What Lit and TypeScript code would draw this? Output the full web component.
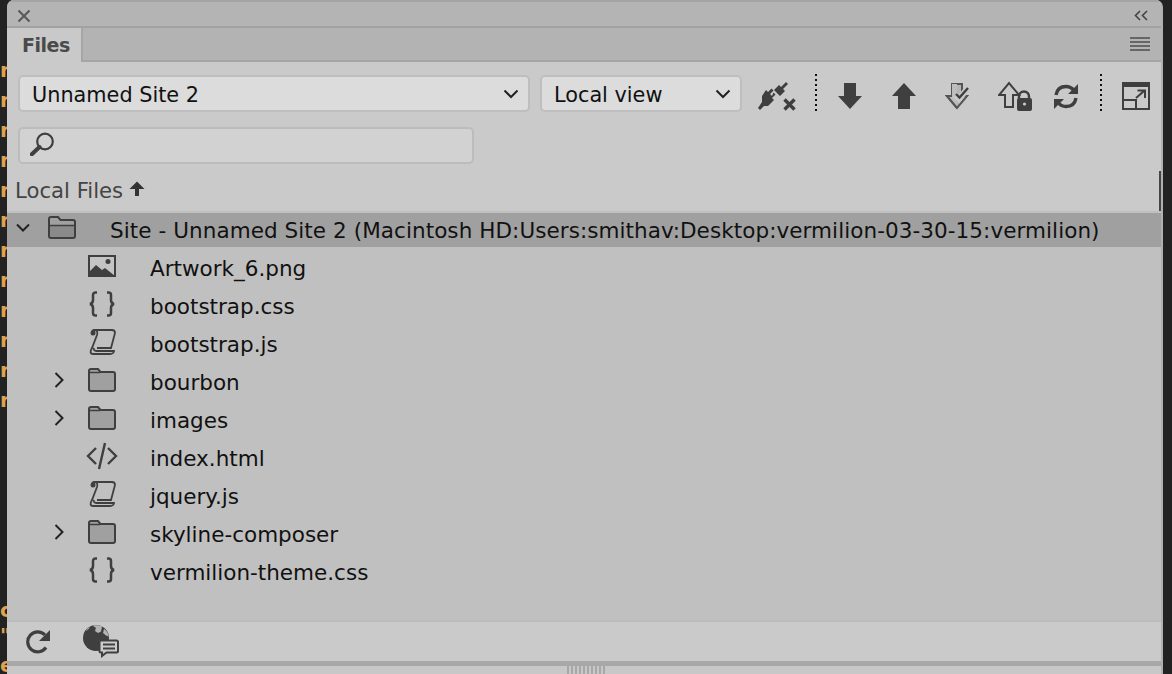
import { LitElement, html, css, svg } from "lit";
import { customElement } from "lit/decorators.js";

const I = "#3f3f3f";
const icon = (w: number, h: number, vb: string, body: unknown, cls = "") =>
  html`<svg class=${cls} width=${w} height=${h} viewBox=${vb}>${body}</svg>`;

const chevD = icon(16, 10, "0 0 16 10", svg`<path d="M1.500 1.500 8 8l6.500-6.500" fill="none" stroke="#222" stroke-width="2"/>`);
const chevR = icon(10, 16, "0 0 10 16", svg`<path d="M1.500 1 8.500 8l-7 7" fill="none" stroke="#222" stroke-width="2"/>`);
const selChev = icon(14, 9, "0 0 14 9", svg`<path d="M1 1.500 7 7.500l6-6" fill="none" stroke="#222" stroke-width="2"/>`);

const folder = icon(28, 24, "0 0 28 24", svg`<path d="M1 5V3a2 2 0 0 1 2-2h7l2.500 3H25a2 2 0 0 1 2 2v15a2 2 0 0 1-2 2H3a2 2 0 0 1-2-2Z" fill="#a0a0a0" stroke="${I}" stroke-width="2"/><path d="M1 4.500h11" stroke="${I}" stroke-width="1.500"/>`);
const siteFolder = icon(28, 23, "0 0 28 23", svg`<path d="M2 10h24v10a2 2 0 0 1-2 2H4a2 2 0 0 1-2-2Z" fill="#8a8a8a"/><path d="M1 5V3a2 2 0 0 1 2-2h7l2.500 3H25a2 2 0 0 1 2 2v14a2 2 0 0 1-2 2H3a2 2 0 0 1-2-2Z" fill="none" stroke="${I}" stroke-width="2"/><path d="M1 9.500h26" stroke="${I}" stroke-width="1.500"/>`);
const image = icon(28, 22, "0 0 28 22", svg`<path d="M0 0h28v22H0Z" fill="${I}"/><path d="M2 2h24v18H2Z" fill="#c4c4c4"/><path d="M1 21V17l7-7 6 5 3-2 10 8Z" fill="${I}"/><circle cx="20" cy="6.500" r="2.500" fill="${I}"/>`);
const braces = icon(26, 26, "0 0 26 26", svg`<path d="M8 1.500H6.500A2.500 2.500 0 0 0 4 4V9c0 2-1 3.500-3 4 2 .5 3 2 3 4v5A2.500 2.500 0 0 0 6.500 24.500H8M18 1.500h1.500A2.500 2.500 0 0 1 22 4V9c0 2 1 3.500 3 4-2 .5-3 2-3 4v5a2.500 2.500 0 0 1-2.500 2.500H18" fill="none" stroke="${I}" stroke-width="2.500"/>`);
const scroll = icon(27, 26, "0 0 27 26", svg`<path d="M3 3a2 2 0 0 1 2-2h18c2 0 3 1 3 3l-4 15H8M5 1c3 0 4 2 3 5L3 19c-2 3-2 6 1 6h17c3 0 4-2 4-3H8c-2 0-4-1-3-3" fill="none" stroke="${I}" stroke-width="1.800"/><circle cx="4" cy="4" r="2.500" fill="${I}"/><path d="M7 22h16" stroke="${I}" stroke-width="1.500"/>`);
const code = icon(32, 28, "0 0 32 28", svg`<path d="M10 6 2 14l8 8M22 6l8 8-8 8M19 1l-6 26" fill="none" stroke="${I}" stroke-width="2.400"/>`);

const search = icon(25, 24, "0 0 25 24", svg`<circle cx="15" cy="9.500" r="7.800" fill="none" stroke="${I}" stroke-width="2.200"/><path d="M9.500 15 1.800 22.300" stroke="${I}" stroke-width="4" stroke-linecap="round"/>`);
const plug = icon(40, 31, "0 0 40 31", svg`<g fill="${I}"><path d="M17 9 22 4l2 2 5-5 2 2-5 5 2 2-5 5Z"/><path d="M1 27l2 2 4-4h4l6-6-2-2 3.500-3.500-2-2L15 15l-2-2 3.500-3.500-2-2L11 11 9 9 5 15v6Z"/></g><path d="M27.500 18.500l10 10M37.500 18.500l-10 10" stroke="${I}" stroke-width="3.400"/>`);
const down = icon(24, 26, "0 0 24 26", svg`<path d="M6 0h12v13h6L12 26 0 13h6Z" fill="${I}"/>`);
const up = icon(24, 26, "0 0 24 26", svg`<path d="M6 26h12V13h6L12 0 0 13h6Z" fill="${I}"/>`);
const checkout = icon(24, 27, "0 0 24 27", svg`<path d="M7 1h10v12h5L12 25 2 13h5Z" fill="#b5b5b5" stroke="#555" stroke-width="2"/><path d="M12 25 2 13h5V1h5Z" fill="#bdbdbd"/><path d="M12 25 2 13h5" fill="none" stroke="#555" stroke-width="2"/><path d="M10 12 14 16 23 5" fill="none" stroke="#c9c9c9" stroke-width="6"/><path d="M11 11 14.500 14.500 23 5" fill="none" stroke="${I}" stroke-width="2.400"/>`);
const lockUp = icon(35, 31, "0 0 35 31", svg`<path d="M7 26V14H1L11 2l10 12h-6v12Z" fill="#c9c9c9" stroke="${I}" stroke-width="2"/><path d="M21 18v-2.500a5 5 0 0 1 10 0V18" fill="none" stroke="${I}" stroke-width="2.400"/><rect x="19" y="17" width="15" height="13" rx="2" fill="${I}"/><circle cx="26.500" cy="23" r="1.600" fill="#c9c9c9"/>`);
const sync = icon(26, 27, "0 0 26 27", svg`<path d="M3 12C4 6 8 3.500 13 3.500c3.500 0 6 1.500 8 4M23 15c-1 6-5 8.500-10 8.500-3.500 0-6-1.500-8-4" fill="none" stroke="${I}" stroke-width="3.400"/><path d="M25 1v10H15ZM1 26V16h10Z" fill="${I}"/>`);
const expand = icon(28, 28, "0 0 28 28", svg`<path d="M0 0h28v28H0Z" fill="${I}"/><path d="M2 5h24v21H2Z" fill="#cacaca"/><path d="M2 17h11v2H2ZM13 17h2v9h-2Z" fill="${I}"/><path d="M14 16 22 9M15.500 8.500h7.500v7.500" fill="none" stroke="${I}" stroke-width="2"/>`);
const refresh = icon(26, 25, "0 0 26 25", svg`<path d="M21 18.500A10 10 0 1 1 20 6" fill="none" stroke="${I}" stroke-width="3.200"/><path d="M25 1v11H14Z" fill="${I}"/>`);
const globe = icon(36, 33, "0 0 36 33", svg`<circle cx="13" cy="13" r="13" fill="${I}"/><path d="M10 .5c1 1.500 2 2 3 2l-1 3.500 3 2 3-1.500 1-5C17 .5 13 0 10 .5ZM21 4l-1 4 3 2.500 2.500 1C25.500 8.500 24 6 21 4ZM2.500 6C4.500 5 6 4 7 2 5 3 3.500 4.500 2.500 6Z" fill="#b4b4b4"/><path d="M17 15h19v15H21l-5 3V15Z" fill="#cacaca"/><path d="M18 15.500h15.500a1.500 1.500 0 0 1 1.500 1.500v9a1.500 1.500 0 0 1-1.500 1.500h-10L19 31v-3.500h-1a1.500 1.500 0 0 1-1.500-1.500v-9a1.500 1.500 0 0 1 1.500-1.500Z" fill="#cacaca" stroke="${I}" stroke-width="2"/><path d="M20 19.500h12M20 23.500h12" stroke="${I}" stroke-width="2"/>`);
const closeX = icon(14, 14, "0 0 14 14", svg`<path d="M1.500 1.500 12.500 12.500M12.500 1.500 1.500 12.500" stroke="#5a5a5a" stroke-width="2.200"/>`);
const collapse = icon(14, 11, "0 0 14 11", svg`<path d="M6 1 1.500 5.500 6 10M13 1 8.500 5.500 13 10" fill="none" stroke="#444" stroke-width="1.600"/>`);
const sortUp = icon(16, 15, "0 0 16 15", svg`<path d="M8 .5 15.500 8H10V15H6V8H.5Z" fill="#333"/>`);

const rows = [
  { n: "Artwork_6.png", i: image },
  { n: "bootstrap.css", i: braces },
  { n: "bootstrap.js", i: scroll },
  { n: "bourbon", i: folder, c: true },
  { n: "images", i: folder, c: true },
  { n: "index.html", i: code },
  { n: "jquery.js", i: scroll },
  { n: "skyline-composer", i: folder, c: true },
  { n: "vermilion-theme.css", i: braces },
];
const edge = ["r","r","r","r","r","r","r","r","r","r","r","r"];

@customElement("app-root")
export class AppRoot extends LitElement {
  static styles = css`
    :host { display: block; width: 1172px; height: 674px; overflow: hidden; font-family: "DejaVu Sans", sans-serif; color: #111; }
    * { box-sizing: border-box; }
    svg { display: block; flex: none; }
    .frame { display: flex; width: 1172px; height: 674px; background: #222; }
    .edge { width: 7px; flex: none; overflow: hidden; display: flex; flex-direction: column; padding-top: 55px; color: #e0a24e; font: 700 20px/30px "DejaVu Sans", sans-serif; }
    .edge span { display: block; height: 30px; }
    .edge .low { margin-top: 180px; height: 25px; }
    .panel { width: 1156px; flex: none; display: flex; flex-direction: column; background: #cacaca; border-radius: 7px 7px 0 0; overflow: hidden; border-right: 2px solid #b0b0b0; }
    .topbar { height: 28px; flex: none; display: flex; align-items: center; justify-content: space-between; padding: 3px 13px 0 10px; background: #b4b4b4; border-top: 2px solid #a4a4a4; border-bottom: 2px solid #a2a2a2; }
    .tabs { height: 34px; flex: none; display: flex; background: #b3b3b3; border-bottom: 2px solid #a6a6a6; align-items: stretch; }
    .tab { width: 76px; margin-bottom: -2px; background: #c9c9c9; border-right: 2px solid #a6a6a6; font-weight: 700; font-size: 19px; letter-spacing: -0.5px; color: #4a4a4a; padding: 3px 0 0 15px; line-height: 28px; }
    .menu { margin-left: auto; margin-right: 11px; align-self: center; width: 20px; height: 14px; display: flex; flex-direction: column; justify-content: space-between; }
    .menu i { display: block; height: 2px; background: #666; }
    .toolbar { height: 51px; flex: none; display: flex; align-items: center; padding: 12px 0 0 11px; }
    .select { height: 37px; flex: none; display: flex; align-items: center; justify-content: space-between; background: #dcdcdc; border: 2px solid #bebebe; border-radius: 5px; font-size: 20.800px; padding: 2px 9px 0 12px; }
    .select svg { margin-top: -2px; }
    .s1 { width: 512px; margin-right: 10px; }
    .s2 { width: 202px; margin-right: 15px; }
    .dots { width: 2px; height: 39px; flex: none; background: repeating-linear-gradient(#111 0 2px, transparent 2px 5px); }
    .t { flex: none; display: flex; justify-content: center; padding-top: 5px; }
    .searchrow { height: 52px; flex: none; padding: 14px 0 0 11px; }
    .search { width: 456px; height: 37px; background: #d2d2d2; border: 2px solid #bcbcbc; border-radius: 5px; padding: 3px 0 0 10px; }
    .head { height: 48px; flex: none; display: flex; align-items: center; padding: 4px 0 0 8px; gap: 6px; font-size: 21.200px; color: #444; border-bottom: 2px solid #c0c0c0; position: relative; }
    .head svg { margin-bottom: 4px; }
    .tick { position: absolute; right: 0; top: 6px; width: 2px; height: 40px; background: #444; }
    .list { flex: 1; background: #c0c0c0; }
    .sel { height: 34px; display: flex; align-items: center; background: #a0a0a0; padding-left: 9px; font-size: 21.500px; letter-spacing: 0.07px; white-space: nowrap; }
    .sel .sc { width: 32px; padding-bottom: 6px; } .sel .sf { width: 62px; padding-bottom: 6px; }
    .rows { padding-top: 2px; padding-left: 32px; }
    .row { height: 38px; display: grid; grid-template-columns: 40px 46px 25px 1fr; align-items: center; font-size: 21.500px; }
    .row .ic { display: flex; justify-content: center; padding-bottom: 5px; }
    .foot { height: 41px; flex: none; display: flex; align-items: center; padding-left: 18px; gap: 32px; background: #cacaca; border-top: 2px solid #bcbcbc; }
    .rule { height: 5px; flex: none; background: #a8a8a8; }
    .grip { height: 8px; flex: none; display: flex; justify-content: center; padding-left: 3px; background: #c8c8c8; }
    .grip span { width: 38px; background: repeating-linear-gradient(90deg, #a8a8a8 0 2px, #c8c8c8 2px 4px); }
    .w10 { width: 10px; } .w18 { width: 18px; } .w40 { width: 40px; } .w42 { width: 42px; } .w48 { width: 48px; }
    .w53 { width: 53px; } .w64 { width: 64px; } .w66 { width: 66px; } .w68 { width: 68px; }
  `;

  render() {
    return html`<div class="frame">
      <div class="edge">${edge.map(() => html`<span>r</span>`)}<span class="low">c</span><span>"</span><span>e</span></div>
      <div class="panel">
        <div class="topbar">${closeX}${collapse}</div>
        <div class="tabs"><div class="tab">Files</div><div class="menu"><i></i><i></i><i></i><i></i></div></div>
        <div class="toolbar">
          <div class="select s1">Unnamed Site 2 ${chevD}</div>
          <div class="select s2">Local view ${chevD}</div>
          <div class="t w40">${plug}</div>
          <div class="t w18"></div>
          <div class="dots"></div>
          <div class="t w66">${down}</div>
          <div class="t w42">${up}</div>
          <div class="t w64">${checkout}</div>
          <div class="t w53">${lockUp}</div>
          <div class="t w48">${sync}</div>
          <div class="t w10"></div>
          <div class="dots"></div>
          <div class="t w68">${expand}</div>
        </div>
        <div class="searchrow"><div class="search">${search}</div></div>
        <div class="head">Local Files ${sortUp}<span class="tick"></span></div>
        <div class="list">
          <div class="sel"><span class="sc">${selChev}</span><span class="sf">${siteFolder}</span>Site - Unnamed Site 2 (Macintosh HD:Users:smithav:Desktop:vermilion-03-30-15:vermilion)</div>
          <div class="rows">
            ${rows.map((r) => html`<div class="row"><span class="ic">${r.c ? chevR : ""}</span><span class="ic">${r.i}</span><span></span><span>${r.n}</span></div>`)}
          </div>
        </div>
        <div class="foot">${refresh}${globe}</div>
        <div class="rule"></div>
        <div class="grip"><span></span></div>
      </div>
    </div>`;
  }
}
